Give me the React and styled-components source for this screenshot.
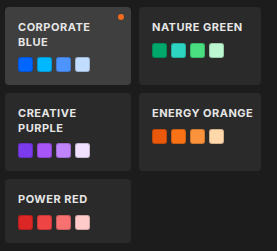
import React from "react";
import styled, { createGlobalStyle } from "styled-components";

const Global = createGlobalStyle`
  html, body { margin: 0; padding: 0; background: #1c1c1c; }
  body { font-family: Inter, "Noto Sans", sans-serif; }
`;

const Grid = styled.div`
  display: grid;
  grid-template-columns: 126px 122px;
  column-gap: 8px;
  row-gap: 8px;
  padding: 7px 0 0 5px;
`;

const Card = styled.div`
  position: relative;
  box-sizing: border-box;
  background: ${(p) => (p.$active ? "#3f3f3f" : "#2a2a2a")};
  border-radius: 4px;
  padding: 13px 11px 13px 13px;
  align-self: stretch;
`;

const Dot = styled.span`
  position: absolute;
  top: 7px;
  right: 7px;
  width: 6px;
  height: 6px;
  border-radius: 50%;
  background: #f26a1b;
`;

const Title = styled.div`
  color: #e6e6e6;
  font-size: 11px;
  font-weight: 700;
  line-height: 14.6px;
  letter-spacing: 0.5px;
  text-transform: uppercase;
  margin-bottom: 8px;
  white-space: ${(p) => (p.$nowrap ? "nowrap" : "normal")};
`;

const Swatches = styled.div`
  display: flex;
  gap: 4px;
`;

const Swatch = styled.span`
  width: 15px;
  height: 15px;
  border-radius: 3px;
  background: ${(p) => p.$c};
  box-shadow: inset 0 0 0 1px rgba(0, 0, 0, 0.18);
`;

const palettes = [
  { name: "Corporate Blue", colors: ["#0066ff", "#00b8ff", "#4d94ff", "#c2dcff"], active: true },
  { name: "Nature Green", colors: ["#00a86b", "#2dd4bf", "#4ade80", "#bbf7d0"], nowrap: true },
  { name: "Creative Purple", colors: ["#7c3aed", "#a855f7", "#c084fc", "#f1e1ff"] },
  { name: "Energy Orange", colors: ["#ea580c", "#f97316", "#fb923c", "#fed7aa"], nowrap: true },
  { name: "Power Red", colors: ["#dc2626", "#ef4444", "#f87171", "#fecaca"], nowrap: true },
];

export default function App() {
  return (
    <>
      <Global />
      <Grid>
        {palettes.map((p) => (
          <Card key={p.name} $active={p.active}>
            {p.active && <Dot />}
            <Title $nowrap={p.nowrap}>{p.name}</Title>
            <Swatches>
              {p.colors.map((c) => (
                <Swatch key={c} $c={c} />
              ))}
            </Swatches>
          </Card>
        ))}
      </Grid>
    </>
  );
}
